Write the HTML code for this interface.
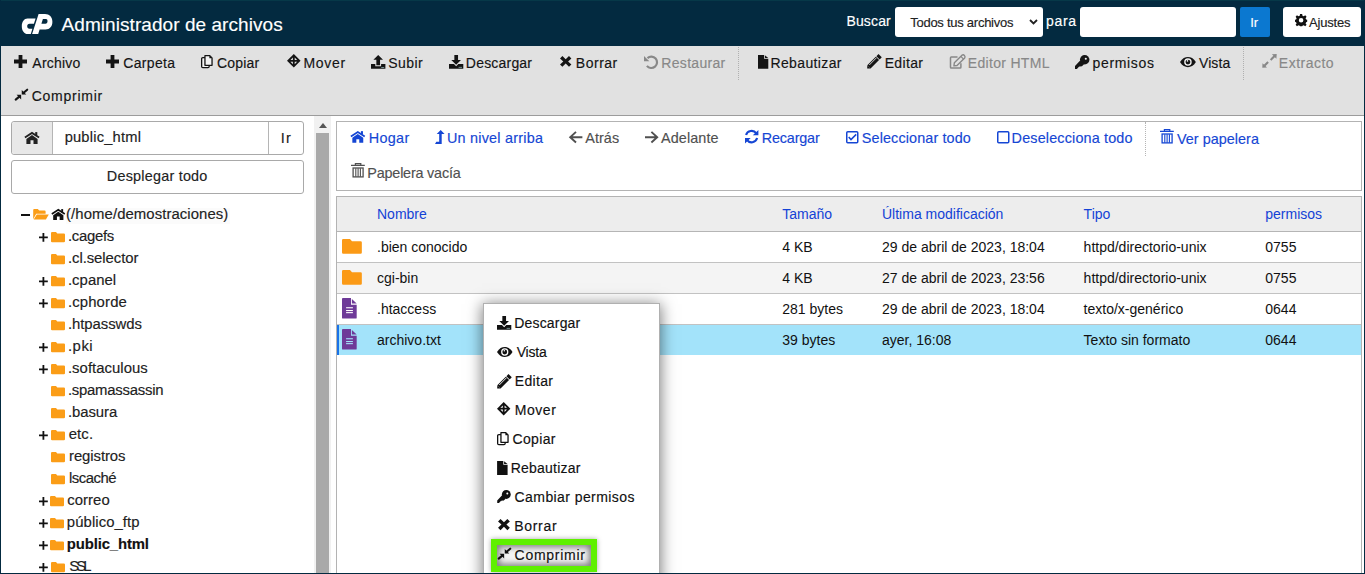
<!DOCTYPE html>
<html><head><meta charset="utf-8"><style>
html,body{margin:0;padding:0;}
body{width:1365px;height:574px;overflow:hidden;position:relative;background:#0a2639;font-family:"Liberation Sans", sans-serif;}
.t{position:absolute;white-space:nowrap;font-family:"Liberation Sans", sans-serif;}
.r{position:absolute;box-sizing:border-box;}
.i{position:absolute;overflow:visible;}
</style></head><body>
<div class="r" style="left:0px;top:0px;width:1365px;height:46px;background:#032a40;"></div>
<div class="r" style="left:0px;top:0px;width:1365px;height:1px;background:#063848;"></div>
<svg class="i" style="left:18px;top:8px;width:40px;height:30px;" viewBox="18 8 40 30" preserveAspectRatio="none" fill="#fff"><path d="M35.6 18.5 L27.5 18.5 C24.2 18.5 21.8 21.8 21.8 26.2 C21.8 30.8 24.2 34 27.8 34 L30.8 34 L32.4 28.7 L29.5 28.7 C28 28.7 27.2 27.6 27.2 26.2 C27.2 24.8 28 23.7 29.5 23.7 L33.9 23.7 Z"/><path d="M32.1 34 L38.2 34 L39.6 29.5 L45.5 29.5 C49.8 29.5 52.4 26.5 52.4 21.8 C52.4 16.8 49.4 14 45 14 L38.6 14 Z M42.9 19 L46 19 C47 19 47.5 19.8 47.5 21.2 C47.5 22.7 46.8 23.7 45.5 23.7 L41.4 23.7 Z" fill-rule="evenodd"/></svg>
<div class="t" style="left:61.56px;top:10.92px;font-size:19px;line-height:27px;color:#fff;letter-spacing:0.061px;-webkit-text-stroke:0.15px #fff;">Administrador de archivos</div>
<div class="t" style="left:846.45px;top:11.15px;font-size:14px;line-height:20px;color:#fff;letter-spacing:0.144px;-webkit-text-stroke:0.15px #fff;">Buscar</div>
<div class="r" style="left:895px;top:7px;width:148px;height:30px;background:#fff;border-radius:3px;"></div>
<div class="t" style="left:910.21px;top:13.80px;font-size:13px;line-height:18px;color:#222;letter-spacing:-0.260px;-webkit-text-stroke:0.15px #222;">Todos tus archivos</div>
<svg class="i" style="left:1029px;top:19px;width:9px;height:6px;" viewBox="0 0 9 6" preserveAspectRatio="none" fill="none"><path d="M1 1 L4.5 4.5 L8 1" fill="none" stroke="#222" stroke-width="1.8"/></svg>
<div class="t" style="left:1046.09px;top:11.15px;font-size:14px;line-height:20px;color:#fff;letter-spacing:0.632px;-webkit-text-stroke:0.15px #fff;">para</div>
<div class="r" style="left:1080px;top:7px;width:156px;height:30px;background:#fff;border-radius:3px;"></div>
<div class="r" style="left:1240px;top:7px;width:30px;height:30px;background:#0b78d0;border-radius:2px;"></div>
<div class="t" style="left:1250.20px;top:13.70px;font-size:13px;line-height:18px;color:#fff;-webkit-text-stroke:0.15px #fff;">Ir</div>
<div class="r" style="left:1283px;top:7px;width:78px;height:30px;background:#fff;border-radius:3px;"></div>
<svg class="i" style="left:1294.6px;top:13.8px;width:12.2px;height:12.2px;" viewBox="0 0 16 16" preserveAspectRatio="none" fill="#111"><path d="M6.6 0 H9.4 L9.8 2.3 L11.5 3.1 L13.4 1.8 L15.2 3.6 L13.9 5.5 L14.6 7.2 L16 7.5 V10.3 L14.6 10.7 L13.9 12.4 L15.2 14.2 L13.4 16 L11.5 14.7 L9.8 15.4 L9.4 16 H6.6 L6.2 15.4 L4.5 14.7 L2.6 16 L0.8 14.2 L2.1 12.4 L1.4 10.7 L0 10.3 V7.5 L1.4 7.2 L2.1 5.5 L0.8 3.6 L2.6 1.8 L4.5 3.1 L6.2 2.3 Z M8 5.2 A3 3 0 1 0 8 11.2 A3 3 0 1 0 8 5.2 Z" fill-rule="evenodd"/></svg>
<div class="t" style="left:1308.97px;top:13.90px;font-size:13px;line-height:18px;color:#222;letter-spacing:-0.189px;-webkit-text-stroke:0.15px #222;">Ajustes</div>
<div class="r" style="left:1px;top:46px;width:1363px;height:70px;background:#e1e1e1;border-bottom:1px solid #9c9c9c;"></div>
<svg class="i" style="left:14px;top:55px;width:13px;height:13px" viewBox="0 0 13.000 13.000" fill="#141414"><path d="M4.6 0 H8.4 V4.6 H13 V8.4 H8.4 V13 H4.6 V8.4 H0 V4.6 H4.6 Z"/></svg>
<div class="t" style="left:32.37px;top:53.15px;font-size:14px;line-height:20px;color:#141414;letter-spacing:0.190px;-webkit-text-stroke:0.15px #141414;">Archivo</div>
<svg class="i" style="left:106px;top:55px;width:13px;height:13px" viewBox="0 0 13.000 13.000" fill="#141414"><path d="M4.6 0 H8.4 V4.6 H13 V8.4 H8.4 V13 H4.6 V8.4 H0 V4.6 H4.6 Z"/></svg>
<div class="t" style="left:123.29px;top:53.15px;font-size:14px;line-height:20px;color:#141414;letter-spacing:0.319px;-webkit-text-stroke:0.15px #141414;">Carpeta</div>
<svg class="i" style="left:201.4px;top:55.2px;width:11.7px;height:13.3px" viewBox="0 0 11.700 13.300" fill="none"><path d="M1.8 2.65 H8.15 V11.5 Q8.15 12.65 7 12.65 H1.8 Q0.65 12.65 0.65 11.5 V3.8 Q0.65 2.65 1.8 2.65 Z" fill="#f4f4f4" stroke="#141414" stroke-width="1.3"/><path d="M3.95 0.65 H8.8 L11.05 2.9 V10.35 H3.95 Z" fill="#f4f4f4" stroke="#141414" stroke-width="1.3" stroke-linejoin="round"/><path d="M8.4 0.6 L11.1 3.3 H8.4 Z" fill="#141414"/></svg>
<div class="t" style="left:216.99px;top:53.15px;font-size:14px;line-height:20px;color:#141414;letter-spacing:0.202px;-webkit-text-stroke:0.15px #141414;">Copiar</div>
<svg class="i" style="left:286.5px;top:54.3px;width:13.6px;height:13.6px" viewBox="0 0 13.400 13.400" fill="#141414"><path d="M6.7 0 L13.4 6.7 L6.7 13.4 L0 6.7 Z"/><path d="M5.8 5.8 H3.4 L5.8 3.4 Z M7.6 5.8 H10 L7.6 3.4 Z M5.8 7.6 H3.4 L5.8 10 Z M7.6 7.6 H10 L7.6 10 Z" fill="#e1e1e1"/></svg>
<div class="t" style="left:303.45px;top:53.15px;font-size:14px;line-height:20px;color:#141414;letter-spacing:0.698px;-webkit-text-stroke:0.15px #141414;">Mover</div>
<svg class="i" style="left:371px;top:55px;width:14.4px;height:13.8px" viewBox="0 0 14.400 13.800" fill="#141414"><path d="M7.2 0 L12 4.8 H9.05 V10.2 H5.35 V4.8 H2.4 Z"/><path d="M0 9 H4.3 V11.3 H10.1 V9 H14.4 V13.8 H0 Z"/><rect x="10.2" y="12" width="3" height="0.8" fill="#8aa"/></svg>
<div class="t" style="left:388.36px;top:53.15px;font-size:14px;line-height:20px;color:#141414;letter-spacing:0.426px;-webkit-text-stroke:0.15px #141414;">Subir</div>
<svg class="i" style="left:448.6px;top:55px;width:14.3px;height:13.8px" viewBox="0 0 14.300 13.800" fill="#141414"><path d="M5.35 0 H9.05 V5 H12 L7.15 9.85 L2.3 5 H5.35 Z"/><path d="M0 9.1 H5 L7.15 11.25 L9.3 9.1 H14.3 V13.8 H0 Z"/><rect x="9.6" y="11.9" width="3.4" height="0.8" fill="#8aa"/></svg>
<div class="t" style="left:465.85px;top:53.15px;font-size:14px;line-height:20px;color:#141414;letter-spacing:0.200px;-webkit-text-stroke:0.15px #141414;">Descargar</div>
<svg class="i" style="left:559.7px;top:55.7px;width:11.4px;height:10.8px" viewBox="0 0 11.400 10.800" fill="#141414"><path d="M2.4 0 L5.7 3.2 L9 0 L11.4 2.4 L8.1 5.4 L11.4 8.4 L9 10.8 L5.7 7.6 L2.4 10.8 L0 8.4 L3.3 5.4 L0 2.4 Z"/></svg>
<div class="t" style="left:575.85px;top:53.15px;font-size:14px;line-height:20px;color:#141414;letter-spacing:0.499px;-webkit-text-stroke:0.15px #141414;">Borrar</div>
<svg class="i" style="left:644px;top:54.8px;width:13.8px;height:13.4px" viewBox="0 0 13.800 13.400" fill="#888888"><path d="M3.5 3.1 A5.7 5.7 0 1 1 2.9 10.9" fill="none" stroke="#888888" stroke-width="2.2"/><path d="M0 0.9 V6.2 H5.3 Z"/></svg>
<div class="t" style="left:661.35px;top:53.15px;font-size:14px;line-height:20px;color:#888888;letter-spacing:0.302px;-webkit-text-stroke:0.15px #888888;">Restaurar</div>
<div class="r" style="left:738px;top:47px;width:1px;height:33px;border-left:1px dotted #b0b0b0;"></div>
<svg class="i" style="left:757.7px;top:55.1px;width:10.3px;height:13.9px" viewBox="0 0 10.500 14.000" fill="#141414"><path d="M0 0 H6.2 V3.8 H10.5 V14 H0 Z"/><path d="M7.0 0.2 L10.4 3.0 H7.0 Z"/></svg>
<div class="t" style="left:770.45px;top:53.15px;font-size:14px;line-height:20px;color:#141414;letter-spacing:0.376px;-webkit-text-stroke:0.15px #141414;">Rebautizar</div>
<svg class="i" style="left:864.2px;top:52px;width:20px;height:20px" viewBox="0 0 20.000 20.000" fill="#141414"><path d="M6.6 16.45 L3.2 16.6 L3.35 13.2 Z" /><path d="M4.97 14.83 L13.45 6.35" stroke="#141414" stroke-width="4.6"/><path d="M14.02 5.78 L16.14 3.66" stroke="#141414" stroke-width="4.6"/><path d="M5.25 13.0 L12.32 5.93" stroke="#e1e1e1" stroke-width="0.9"/></svg>
<div class="t" style="left:884.65px;top:53.15px;font-size:14px;line-height:20px;color:#141414;letter-spacing:0.364px;-webkit-text-stroke:0.15px #141414;">Editar</div>
<svg class="i" style="left:944px;top:50px;width:24px;height:22px" viewBox="0 0 24.000 22.000" fill="#888888"><path d="M13.5 6.9 H7.3 Q6.5 6.9 6.5 7.7 V17.3 Q6.5 18.1 7.3 18.1 H16.1 Q16.9 18.1 16.9 17.3 V13.3" fill="none" stroke="#888888" stroke-width="1.5"/><path d="M9.9 15.9 L10.35 12.8 L18.0 5.2 Q19.3 4.3 20.4 5.4 Q21.5 6.6 20.7 7.9 L13.0 15.5 Z" fill="none" stroke="#888888" stroke-width="1.4" stroke-linejoin="round"/><path d="M16.9 6.35 L19.5 9.05" stroke="#888888" stroke-width="1.2"/></svg>
<div class="t" style="left:967.85px;top:53.15px;font-size:14px;line-height:20px;color:#888888;letter-spacing:0.304px;-webkit-text-stroke:0.15px #888888;">Editor HTML</div>
<svg class="i" style="left:1075.4px;top:54.9px;width:14.5px;height:14px" viewBox="0 0 14.500 14.000" fill="#141414"><circle cx="9.7" cy="4.75" r="4.75"/><circle cx="10.8" cy="3.7" r="1.05" fill="#f4f4f4"/><path d="M5.2 5.5 L9.0 9.3 L6.7 11.6 L5.9 11.0 L5.0 11.9 L4.4 11.3 L1.9 14 H0 V11.1 Z"/></svg>
<div class="t" style="left:1092.59px;top:53.15px;font-size:14px;line-height:20px;color:#141414;letter-spacing:0.645px;-webkit-text-stroke:0.15px #141414;">permisos</div>
<svg class="i" style="left:1179.8px;top:56.7px;width:15.9px;height:10.2px" viewBox="0 0 15.900 10.200" fill="#141414"><path d="M0 5.1 C2.2 1.3 5.2 0 7.95 0 C10.7 0 13.7 1.3 15.9 5.1 C13.7 8.9 10.7 10.2 7.95 10.2 C5.2 10.2 2.2 8.9 0 5.1 Z"/><circle cx="7.95" cy="5.1" r="3.75" fill="#f4f4f4"/><circle cx="7.95" cy="5.1" r="2.45"/><circle cx="7.5" cy="3.9" r="0.8" fill="#f4f4f4"/></svg>
<div class="t" style="left:1198.93px;top:53.15px;font-size:14px;line-height:20px;color:#141414;letter-spacing:0.125px;-webkit-text-stroke:0.15px #141414;">Vista</div>
<div class="r" style="left:1243px;top:47px;width:1px;height:33px;border-left:1px dotted #b0b0b0;"></div>
<svg class="i" style="left:1256px;top:50px;width:24px;height:22px" viewBox="0 0 24.000 22.000" fill="#888888"><path d="M20.7 4.0 L15.9 4.3 L20.4 8.8 Z M6.3 17.8 L6.5 13.3 L11.0 17.6 Z"/><path d="M18.6 6.1 L14.6 10.0 M8.4 15.7 L12.1 12.0" stroke="#888888" stroke-width="2.1"/></svg>
<div class="t" style="left:1278.85px;top:53.15px;font-size:14px;line-height:20px;color:#888888;letter-spacing:0.483px;-webkit-text-stroke:0.15px #888888;">Extracto</div>
<svg class="i" style="left:14.5px;top:89.3px;width:13px;height:11.5px" viewBox="0 0 13.000 11.500" fill="#141414"><path d="M6.75 5.45 L6.75 0.9 L11.3 5.45 Z M6.15 5.85 L1.6 5.85 L6.15 10.4 Z"/><path d="M8 4.2 L12.2 0.7 M4.9 7.1 L0.7 10.6" stroke="#141414" stroke-width="2.1" stroke-linecap="round"/></svg>
<div class="t" style="left:31.69px;top:86.15px;font-size:14px;line-height:20px;color:#141414;letter-spacing:0.750px;-webkit-text-stroke:0.15px #141414;">Comprimir</div>
<div class="r" style="left:1px;top:116px;width:1363px;height:457px;background:#fff;"></div>
<div class="r" style="left:11px;top:121px;width:293px;height:34px;border:1px solid #a9a9a9;border-radius:3px;background:#fff;"></div>
<div class="r" style="left:12px;top:122px;width:41px;height:32px;background:#e8e8e8;border-right:1px solid #b5b5b5;border-radius:3px 0 0 3px;"></div>
<svg class="i" style="left:24px;top:132px;width:15.9px;height:12px" viewBox="0 0 15.900 12.000" fill="#222"><path d="M0.9 5.5 L8 0.9 L15.1 5.5" fill="none" stroke="#222" stroke-width="1.8"/><rect x="11.2" y="0.1" width="2.1" height="3.4"/><path d="M2.4 6.9 L8 3.0 L13.6 6.9 V12 H9.5 V8.3 H6.5 V12 H2.4 Z"/></svg>
<div class="r" style="left:268px;top:122px;width:1px;height:32px;background:#b5b5b5;"></div>
<div class="t" style="left:64.64px;top:127.01px;font-size:14.7px;line-height:21px;color:#222;letter-spacing:0.199px;-webkit-text-stroke:0.15px #222;">public_html</div>
<div class="t" style="left:280.67px;top:127.98px;font-size:14.5px;line-height:20px;color:#222;letter-spacing:1.421px;-webkit-text-stroke:0.15px #222;">Ir</div>
<div class="r" style="left:11px;top:160px;width:293px;height:34px;border:1px solid #a9a9a9;border-radius:3px;background:#fff;"></div>
<div class="t" style="left:106.82px;top:166.01px;font-size:14.4px;line-height:20px;color:#222;letter-spacing:0.225px;-webkit-text-stroke:0.15px #222;">Desplegar todo</div>
<div class="r" style="left:66px;top:208px;width:164px;height:16px;background:#fbfbfb;"></div>
<div class="r" style="left:21.1px;top:214.3px;width:8.8px;height:1.6px;background:#111;"></div>
<svg class="i" style="left:32.9px;top:209.3px;width:16px;height:10.5px" viewBox="0 0 16.000 10.500" fill="#fb9d17"><path d="M0.2 1 Q0.2 0 1.2 0 H4.8 L6.2 1.5 H11.6 Q12.6 1.5 12.6 2.5 V4.8 H3.2 L0.2 10.2 Z"/><path d="M3.8 5.6 H15.8 L12.9 10.4 H0.7 Z"/></svg>
<svg class="i" style="left:51.3px;top:209px;width:14.6px;height:12px" viewBox="0 0 16.000 13.151" fill="#111"><path d="M0.9 5.5 L8 0.9 L15.1 5.5" fill="none" stroke="#111" stroke-width="1.8"/><rect x="11.2" y="0.1" width="2.1" height="3.4"/><path d="M2.4 6.9 L8 3.0 L13.6 6.9 V12 H9.5 V8.3 H6.5 V12 H2.4 Z"/></svg>
<div class="t" style="left:66.08px;top:204.34px;font-size:14.9px;line-height:21px;color:#222;letter-spacing:0.081px;-webkit-text-stroke:0.15px #222;">(/home/demostraciones)</div>
<svg class="i" style="left:39.1px;top:232.6px;width:8.8px;height:8.8px" viewBox="0 0 8.800 8.800" fill="#111"><path d="M3.5 0 H5.3 V3.5 H8.8 V5.3 H5.3 V8.8 H3.5 V5.3 H0 V3.5 H3.5 Z"/></svg>
<svg class="i" style="left:50.9px;top:231.7px;width:14.1px;height:10.3px" viewBox="0 0 14.100 10.300" fill="#fb9d17"><path d="M0 1.1 Q0 0 1.1 0 H5 L6.3 1.4 H12.9 Q14 1.4 14 2.5 V9.2 Q14 10.3 12.9 10.3 H1.1 Q0 10.3 0 9.2 Z"/></svg>
<div class="t" style="left:67.94px;top:225.94px;font-size:14.9px;line-height:21px;color:#222;letter-spacing:-0.291px;-webkit-text-stroke:0.15px #222;">.cagefs</div>
<svg class="i" style="left:50.9px;top:253.70000000000002px;width:14.1px;height:10.3px" viewBox="0 0 14.100 10.300" fill="#fb9d17"><path d="M0 1.1 Q0 0 1.1 0 H5 L6.3 1.4 H12.9 Q14 1.4 14 2.5 V9.2 Q14 10.3 12.9 10.3 H1.1 Q0 10.3 0 9.2 Z"/></svg>
<div class="t" style="left:67.94px;top:247.94px;font-size:14.9px;line-height:21px;color:#222;letter-spacing:-0.063px;-webkit-text-stroke:0.15px #222;">.cl.selector</div>
<svg class="i" style="left:39.1px;top:276.6px;width:8.8px;height:8.8px" viewBox="0 0 8.800 8.800" fill="#111"><path d="M3.5 0 H5.3 V3.5 H8.8 V5.3 H5.3 V8.8 H3.5 V5.3 H0 V3.5 H3.5 Z"/></svg>
<svg class="i" style="left:50.9px;top:275.70000000000005px;width:14.1px;height:10.3px" viewBox="0 0 14.100 10.300" fill="#fb9d17"><path d="M0 1.1 Q0 0 1.1 0 H5 L6.3 1.4 H12.9 Q14 1.4 14 2.5 V9.2 Q14 10.3 12.9 10.3 H1.1 Q0 10.3 0 9.2 Z"/></svg>
<div class="t" style="left:67.94px;top:269.94px;font-size:14.9px;line-height:21px;color:#222;letter-spacing:0.036px;-webkit-text-stroke:0.15px #222;">.cpanel</div>
<svg class="i" style="left:39.1px;top:298.6px;width:8.8px;height:8.8px" viewBox="0 0 8.800 8.800" fill="#111"><path d="M3.5 0 H5.3 V3.5 H8.8 V5.3 H5.3 V8.8 H3.5 V5.3 H0 V3.5 H3.5 Z"/></svg>
<svg class="i" style="left:50.9px;top:297.70000000000005px;width:14.1px;height:10.3px" viewBox="0 0 14.100 10.300" fill="#fb9d17"><path d="M0 1.1 Q0 0 1.1 0 H5 L6.3 1.4 H12.9 Q14 1.4 14 2.5 V9.2 Q14 10.3 12.9 10.3 H1.1 Q0 10.3 0 9.2 Z"/></svg>
<div class="t" style="left:67.94px;top:291.94px;font-size:14.9px;line-height:21px;color:#222;letter-spacing:0.134px;-webkit-text-stroke:0.15px #222;">.cphorde</div>
<svg class="i" style="left:50.9px;top:319.70000000000005px;width:14.1px;height:10.3px" viewBox="0 0 14.100 10.300" fill="#fb9d17"><path d="M0 1.1 Q0 0 1.1 0 H5 L6.3 1.4 H12.9 Q14 1.4 14 2.5 V9.2 Q14 10.3 12.9 10.3 H1.1 Q0 10.3 0 9.2 Z"/></svg>
<div class="t" style="left:67.94px;top:313.94px;font-size:14.9px;line-height:21px;color:#222;letter-spacing:-0.049px;-webkit-text-stroke:0.15px #222;">.htpasswds</div>
<svg class="i" style="left:39.1px;top:342.6px;width:8.8px;height:8.8px" viewBox="0 0 8.800 8.800" fill="#111"><path d="M3.5 0 H5.3 V3.5 H8.8 V5.3 H5.3 V8.8 H3.5 V5.3 H0 V3.5 H3.5 Z"/></svg>
<svg class="i" style="left:50.9px;top:341.70000000000005px;width:14.1px;height:10.3px" viewBox="0 0 14.100 10.300" fill="#fb9d17"><path d="M0 1.1 Q0 0 1.1 0 H5 L6.3 1.4 H12.9 Q14 1.4 14 2.5 V9.2 Q14 10.3 12.9 10.3 H1.1 Q0 10.3 0 9.2 Z"/></svg>
<div class="t" style="left:67.94px;top:335.94px;font-size:14.9px;line-height:21px;color:#222;letter-spacing:0.523px;-webkit-text-stroke:0.15px #222;">.pki</div>
<svg class="i" style="left:39.1px;top:364.6px;width:8.8px;height:8.8px" viewBox="0 0 8.800 8.800" fill="#111"><path d="M3.5 0 H5.3 V3.5 H8.8 V5.3 H5.3 V8.8 H3.5 V5.3 H0 V3.5 H3.5 Z"/></svg>
<svg class="i" style="left:50.9px;top:363.70000000000005px;width:14.1px;height:10.3px" viewBox="0 0 14.100 10.300" fill="#fb9d17"><path d="M0 1.1 Q0 0 1.1 0 H5 L6.3 1.4 H12.9 Q14 1.4 14 2.5 V9.2 Q14 10.3 12.9 10.3 H1.1 Q0 10.3 0 9.2 Z"/></svg>
<div class="t" style="left:67.94px;top:357.94px;font-size:14.9px;line-height:21px;color:#222;letter-spacing:0.026px;-webkit-text-stroke:0.15px #222;">.softaculous</div>
<svg class="i" style="left:50.9px;top:385.70000000000005px;width:14.1px;height:10.3px" viewBox="0 0 14.100 10.300" fill="#fb9d17"><path d="M0 1.1 Q0 0 1.1 0 H5 L6.3 1.4 H12.9 Q14 1.4 14 2.5 V9.2 Q14 10.3 12.9 10.3 H1.1 Q0 10.3 0 9.2 Z"/></svg>
<div class="t" style="left:67.94px;top:379.94px;font-size:14.9px;line-height:21px;color:#222;letter-spacing:-0.244px;-webkit-text-stroke:0.15px #222;">.spamassassin</div>
<svg class="i" style="left:50.9px;top:407.70000000000005px;width:14.1px;height:10.3px" viewBox="0 0 14.100 10.300" fill="#fb9d17"><path d="M0 1.1 Q0 0 1.1 0 H5 L6.3 1.4 H12.9 Q14 1.4 14 2.5 V9.2 Q14 10.3 12.9 10.3 H1.1 Q0 10.3 0 9.2 Z"/></svg>
<div class="t" style="left:67.94px;top:401.94px;font-size:14.9px;line-height:21px;color:#222;letter-spacing:-0.073px;-webkit-text-stroke:0.15px #222;">.basura</div>
<svg class="i" style="left:39.1px;top:430.6px;width:8.8px;height:8.8px" viewBox="0 0 8.800 8.800" fill="#111"><path d="M3.5 0 H5.3 V3.5 H8.8 V5.3 H5.3 V8.8 H3.5 V5.3 H0 V3.5 H3.5 Z"/></svg>
<svg class="i" style="left:50.9px;top:429.70000000000005px;width:14.1px;height:10.3px" viewBox="0 0 14.100 10.300" fill="#fb9d17"><path d="M0 1.1 Q0 0 1.1 0 H5 L6.3 1.4 H12.9 Q14 1.4 14 2.5 V9.2 Q14 10.3 12.9 10.3 H1.1 Q0 10.3 0 9.2 Z"/></svg>
<div class="t" style="left:68.67px;top:423.94px;font-size:14.9px;line-height:21px;color:#222;letter-spacing:0.121px;-webkit-text-stroke:0.15px #222;">etc.</div>
<svg class="i" style="left:50.9px;top:451.70000000000005px;width:14.1px;height:10.3px" viewBox="0 0 14.100 10.300" fill="#fb9d17"><path d="M0 1.1 Q0 0 1.1 0 H5 L6.3 1.4 H12.9 Q14 1.4 14 2.5 V9.2 Q14 10.3 12.9 10.3 H1.1 Q0 10.3 0 9.2 Z"/></svg>
<div class="t" style="left:69.02px;top:445.94px;font-size:14.9px;line-height:21px;color:#222;letter-spacing:-0.078px;-webkit-text-stroke:0.15px #222;">registros</div>
<svg class="i" style="left:50.9px;top:473.70000000000005px;width:14.1px;height:10.3px" viewBox="0 0 14.100 10.300" fill="#fb9d17"><path d="M0 1.1 Q0 0 1.1 0 H5 L6.3 1.4 H12.9 Q14 1.4 14 2.5 V9.2 Q14 10.3 12.9 10.3 H1.1 Q0 10.3 0 9.2 Z"/></svg>
<div class="t" style="left:69.00px;top:467.94px;font-size:14.9px;line-height:21px;color:#222;letter-spacing:-0.476px;-webkit-text-stroke:0.15px #222;">lscach&eacute;</div>
<svg class="i" style="left:39.1px;top:496.6px;width:8.8px;height:8.8px" viewBox="0 0 8.800 8.800" fill="#111"><path d="M3.5 0 H5.3 V3.5 H8.8 V5.3 H5.3 V8.8 H3.5 V5.3 H0 V3.5 H3.5 Z"/></svg>
<svg class="i" style="left:50.2px;top:495.70000000000005px;width:14.1px;height:10.3px" viewBox="0 0 14.100 10.300" fill="#fb9d17"><path d="M0 1.1 Q0 0 1.1 0 H5 L6.3 1.4 H12.9 Q14 1.4 14 2.5 V9.2 Q14 10.3 12.9 10.3 H1.1 Q0 10.3 0 9.2 Z"/></svg>
<div class="t" style="left:67.17px;top:489.94px;font-size:14.9px;line-height:21px;color:#222;letter-spacing:0.065px;-webkit-text-stroke:0.15px #222;">correo</div>
<svg class="i" style="left:39.1px;top:518.6px;width:8.8px;height:8.8px" viewBox="0 0 8.800 8.800" fill="#111"><path d="M3.5 0 H5.3 V3.5 H8.8 V5.3 H5.3 V8.8 H3.5 V5.3 H0 V3.5 H3.5 Z"/></svg>
<svg class="i" style="left:50.2px;top:517.7px;width:14.1px;height:10.3px" viewBox="0 0 14.100 10.300" fill="#fb9d17"><path d="M0 1.1 Q0 0 1.1 0 H5 L6.3 1.4 H12.9 Q14 1.4 14 2.5 V9.2 Q14 10.3 12.9 10.3 H1.1 Q0 10.3 0 9.2 Z"/></svg>
<div class="t" style="left:66.83px;top:511.94px;font-size:14.9px;line-height:21px;color:#222;letter-spacing:0.072px;-webkit-text-stroke:0.15px #222;">p&uacute;blico_ftp</div>
<svg class="i" style="left:39.1px;top:540.6px;width:8.8px;height:8.8px" viewBox="0 0 8.800 8.800" fill="#111"><path d="M3.5 0 H5.3 V3.5 H8.8 V5.3 H5.3 V8.8 H3.5 V5.3 H0 V3.5 H3.5 Z"/></svg>
<svg class="i" style="left:50.2px;top:539.7px;width:14.1px;height:10.3px" viewBox="0 0 14.100 10.300" fill="#fb9d17"><path d="M0 1.1 Q0 0 1.1 0 H5 L6.3 1.4 H12.9 Q14 1.4 14 2.5 V9.2 Q14 10.3 12.9 10.3 H1.1 Q0 10.3 0 9.2 Z"/></svg>
<div class="t" style="left:66.82px;top:533.94px;font-size:14.9px;line-height:21px;color:#111;font-weight:700;letter-spacing:-0.138px;-webkit-text-stroke:0.15px #111;">public_html</div>
<svg class="i" style="left:39.1px;top:562.6px;width:8.8px;height:8.8px" viewBox="0 0 8.800 8.800" fill="#111"><path d="M3.5 0 H5.3 V3.5 H8.8 V5.3 H5.3 V8.8 H3.5 V5.3 H0 V3.5 H3.5 Z"/></svg>
<svg class="i" style="left:50.9px;top:561.7px;width:14.1px;height:10.3px" viewBox="0 0 14.100 10.300" fill="#fb9d17"><path d="M0 1.1 Q0 0 1.1 0 H5 L6.3 1.4 H12.9 Q14 1.4 14 2.5 V9.2 Q14 10.3 12.9 10.3 H1.1 Q0 10.3 0 9.2 Z"/></svg>
<div class="t" style="left:69.31px;top:555.94px;font-size:14.9px;line-height:21px;color:#222;letter-spacing:-2.942px;-webkit-text-stroke:0.15px #222;">SSL</div>
<div class="r" style="left:314px;top:116px;width:17px;height:457px;background:#f1f1f1;"></div>
<svg class="i" style="left:319px;top:123px;width:8px;height:5px" viewBox="0 0 8.000 5.000" fill="#555"><path d="M0 5 L4 0 L8 5 Z"/></svg>
<div class="r" style="left:316px;top:133px;width:13px;height:440px;background:#a9a9a9;"></div>
<div class="r" style="left:336px;top:121px;width:1026px;height:70px;border:1px solid #b3b3b3;background:#fff;"></div>
<svg class="i" style="left:350px;top:131px;width:15.6px;height:11.8px" viewBox="0 0 16.000 12.000" fill="#1546d4"><path d="M0.9 5.5 L8 0.9 L15.1 5.5" fill="none" stroke="#1546d4" stroke-width="1.8"/><rect x="11.2" y="0.1" width="2.1" height="3.4"/><path d="M2.4 6.9 L8 3.0 L13.6 6.9 V12 H9.5 V8.3 H6.5 V12 H2.4 Z"/></svg>
<div class="t" style="left:368.82px;top:127.81px;font-size:14.4px;line-height:20px;color:#1546d4;letter-spacing:0.300px;-webkit-text-stroke:0.15px #1546d4;">Hogar</div>
<svg class="i" style="left:435.2px;top:129.8px;width:9.6px;height:14px" viewBox="0 0 9.600 14.000" fill="#1546d4"><path d="M5.7 0 L9.6 4 H6.7 V14 H0 L1.3 11.7 H4.2 V4 H1.7 Z"/></svg>
<div class="t" style="left:446.89px;top:127.81px;font-size:14.4px;line-height:20px;color:#1546d4;letter-spacing:0.234px;-webkit-text-stroke:0.15px #1546d4;">Un nivel arriba</div>
<svg class="i" style="left:569.2px;top:130.8px;width:13.4px;height:12.4px" viewBox="0 0 13.400 12.400" fill="#505050"><path d="M7 0.9 L1.2 6.2 L7 11.5 M1.5 6.2 H13.4" fill="none" stroke="#505050" stroke-width="1.9"/></svg>
<div class="t" style="left:585.37px;top:127.81px;font-size:14.4px;line-height:20px;color:#505050;letter-spacing:0.034px;-webkit-text-stroke:0.15px #505050;">Atr&aacute;s</div>
<svg class="i" style="left:644.5px;top:130.8px;width:13.4px;height:12.4px" viewBox="0 0 13.400 12.400" fill="#505050"><path d="M6.4 0.9 L12.2 6.2 L6.4 11.5 M11.9 6.2 H0" fill="none" stroke="#505050" stroke-width="1.9"/></svg>
<div class="t" style="left:660.97px;top:127.81px;font-size:14.4px;line-height:20px;color:#505050;letter-spacing:0.116px;-webkit-text-stroke:0.15px #505050;">Adelante</div>
<svg class="i" style="left:745.4px;top:130.2px;width:13.4px;height:13.4px" viewBox="0 0 13.400 13.400" fill="#1546d4"><path d="M1.05 5.1 A5.75 5.75 0 0 1 11.3 3.3 M12.15 8.1 A5.75 5.75 0 0 1 1.9 9.9" fill="none" stroke="#1546d4" stroke-width="2.1"/><path d="M13.4 0 V5.2 H7.8 Z M0 7.9 H5.7 L0 13.4 Z"/></svg>
<div class="t" style="left:761.82px;top:127.81px;font-size:14.4px;line-height:20px;color:#1546d4;letter-spacing:-0.186px;-webkit-text-stroke:0.15px #1546d4;">Recargar</div>
<svg class="i" style="left:846.4px;top:130.8px;width:12.5px;height:12.5px" viewBox="0 0 12.500 12.500" fill="none"><rect x="0.75" y="0.75" width="11" height="11" rx="1" fill="none" stroke="#1546d4" stroke-width="1.5"/><path d="M2.7 5.9 L5 8.6 L10.2 3.4" fill="none" stroke="#1546d4" stroke-width="1.5"/></svg>
<div class="t" style="left:861.84px;top:127.81px;font-size:14.4px;line-height:20px;color:#1546d4;letter-spacing:0.120px;-webkit-text-stroke:0.15px #1546d4;">Seleccionar todo</div>
<svg class="i" style="left:996.6px;top:130.8px;width:12.5px;height:12.5px" viewBox="0 0 12.500 12.500" fill="none"><rect x="0.75" y="0.75" width="11" height="11" rx="1" fill="none" stroke="#1546d4" stroke-width="1.5"/></svg>
<div class="t" style="left:1011.62px;top:127.81px;font-size:14.4px;line-height:20px;color:#1546d4;letter-spacing:0.157px;-webkit-text-stroke:0.15px #1546d4;">Deselecciona todo</div>
<div class="r" style="left:1145px;top:122px;width:1px;height:34px;border-left:1px dotted #b5b5b5;"></div>
<svg class="i" style="left:1160.2px;top:128.8px;width:13.8px;height:14.6px" viewBox="0 0 13.800 14.600" fill="none"><path d="M0 2.3 H13.8 M4.4 2.1 V0.6 H9.8 V2.1" fill="none" stroke="#1546d4" stroke-width="1.2"/><rect x="2.1" y="5.0" width="10" height="8.9" fill="none" stroke="#1546d4" stroke-width="1.3"/><path d="M4.8 5.2 V13.8 M7.1 5.2 V13.8 M9.4 5.2 V13.8" stroke="#1546d4" stroke-width="1.1"/></svg>
<div class="t" style="left:1176.93px;top:129.01px;font-size:14.4px;line-height:20px;color:#1546d4;letter-spacing:0.037px;-webkit-text-stroke:0.15px #1546d4;">Ver papelera</div>
<svg class="i" style="left:351px;top:162.8px;width:13.8px;height:14.6px" viewBox="0 0 13.800 14.600" fill="none"><path d="M0 2.3 H13.8 M4.4 2.1 V0.6 H9.8 V2.1" fill="none" stroke="#505050" stroke-width="1.2"/><rect x="2.1" y="5.0" width="10" height="8.9" fill="none" stroke="#505050" stroke-width="1.3"/><path d="M4.8 5.2 V13.8 M7.1 5.2 V13.8 M9.4 5.2 V13.8" stroke="#505050" stroke-width="1.1"/></svg>
<div class="t" style="left:367.32px;top:162.51px;font-size:14.4px;line-height:20px;color:#505050;letter-spacing:-0.199px;-webkit-text-stroke:0.15px #505050;">Papelera vac&iacute;a</div>
<div class="r" style="left:336px;top:196px;width:1026px;height:378px;border:1px solid #b3b3b3;background:#fff;"></div>
<div class="r" style="left:337px;top:197px;width:1024px;height:35px;background:#ededed;border-bottom:1px solid #b5b5b5;"></div>
<div class="t" style="left:377.00px;top:203.95px;font-size:14px;line-height:20px;color:#1342d6;">Nombre</div>
<div class="t" style="left:782.30px;top:203.95px;font-size:14px;line-height:20px;color:#1342d6;">Tama&ntilde;o</div>
<div class="t" style="left:882.00px;top:203.95px;font-size:14px;line-height:20px;color:#1342d6;">&Uacute;ltima modificaci&oacute;n</div>
<div class="t" style="left:1083.60px;top:203.95px;font-size:14px;line-height:20px;color:#1342d6;">Tipo</div>
<div class="t" style="left:1265.30px;top:203.95px;font-size:14px;line-height:20px;color:#1342d6;">permisos</div>
<div class="r" style="left:337px;top:232px;width:1024px;height:31px;background:#fff;border-bottom:1px solid #c2c2c2;"></div>
<svg class="i" style="left:342px;top:239.2px;width:19.85px;height:14.7px" viewBox="0 0 19.850 14.700" fill="#fb9a16"><path d="M0 1.2 Q0 0 1.2 0 H8 L10 2.3 H18.6 Q19.85 2.3 19.85 3.5 V13.5 Q19.85 14.7 18.6 14.7 H1.2 Q0 14.7 0 13.5 Z"/></svg>
<div class="t" style="left:377.00px;top:236.75px;font-size:14px;line-height:20px;color:#111;">.bien conocido</div>
<div class="t" style="left:782.30px;top:236.75px;font-size:14px;line-height:20px;color:#111;">4 KB</div>
<div class="t" style="left:882.00px;top:236.75px;font-size:14px;line-height:20px;color:#111;">29 de abril de 2023, 18:04</div>
<div class="t" style="left:1083.60px;top:236.75px;font-size:14px;line-height:20px;color:#111;">httpd/directorio-unix</div>
<div class="t" style="left:1265.30px;top:236.75px;font-size:14px;line-height:20px;color:#111;">0755</div>
<div class="r" style="left:337px;top:263px;width:1024px;height:31px;background:#f4f4f4;border-bottom:1px solid #c2c2c2;"></div>
<svg class="i" style="left:342px;top:270.2px;width:19.85px;height:14.7px" viewBox="0 0 19.850 14.700" fill="#fb9a16"><path d="M0 1.2 Q0 0 1.2 0 H8 L10 2.3 H18.6 Q19.85 2.3 19.85 3.5 V13.5 Q19.85 14.7 18.6 14.7 H1.2 Q0 14.7 0 13.5 Z"/></svg>
<div class="t" style="left:377.00px;top:267.75px;font-size:14px;line-height:20px;color:#111;">cgi-bin</div>
<div class="t" style="left:782.30px;top:267.75px;font-size:14px;line-height:20px;color:#111;">4 KB</div>
<div class="t" style="left:882.00px;top:267.75px;font-size:14px;line-height:20px;color:#111;">27 de abril de 2023, 23:56</div>
<div class="t" style="left:1083.60px;top:267.75px;font-size:14px;line-height:20px;color:#111;">httpd/directorio-unix</div>
<div class="t" style="left:1265.30px;top:267.75px;font-size:14px;line-height:20px;color:#111;">0755</div>
<div class="r" style="left:337px;top:294px;width:1024px;height:31px;background:#fff;border-bottom:1px solid #c2c2c2;"></div>
<svg class="i" style="left:342.1px;top:298.1px;width:14.7px;height:20.6px" viewBox="0 0 14.700 20.600" fill="#6e3a98"><path d="M0.9 0 H9 V6.8 H14.7 V19.7 Q14.7 20.6 13.8 20.6 H0.9 Q0 20.6 0 19.7 V0.9 Q0 0 0.9 0 Z"/><path d="M9.9 0.9 L14.7 5.6 H9.9 Z"/><rect x="4.1" y="9.2" width="6.8" height="1.1" fill="#fff"/><rect x="4.1" y="12.0" width="6.8" height="1.1" fill="#fff"/><rect x="4.1" y="14.1" width="6.8" height="1.1" fill="#fff"/></svg>
<div class="t" style="left:377.00px;top:298.75px;font-size:14px;line-height:20px;color:#111;">.htaccess</div>
<div class="t" style="left:782.30px;top:298.75px;font-size:14px;line-height:20px;color:#111;">281 bytes</div>
<div class="t" style="left:882.00px;top:298.75px;font-size:14px;line-height:20px;color:#111;">29 de abril de 2023, 18:04</div>
<div class="t" style="left:1083.60px;top:298.75px;font-size:14px;line-height:20px;color:#111;">texto/x-gen&eacute;rico</div>
<div class="t" style="left:1265.30px;top:298.75px;font-size:14px;line-height:20px;color:#111;">0644</div>
<div class="r" style="left:337px;top:325px;width:1024px;height:31px;background:#a3e3fa;height:30px;"></div>
<svg class="i" style="left:342.1px;top:329.1px;width:14.7px;height:20.6px" viewBox="0 0 14.700 20.600" fill="#6e3a98"><path d="M0.9 0 H9 V6.8 H14.7 V19.7 Q14.7 20.6 13.8 20.6 H0.9 Q0 20.6 0 19.7 V0.9 Q0 0 0.9 0 Z"/><path d="M9.9 0.9 L14.7 5.6 H9.9 Z"/><rect x="4.1" y="9.2" width="6.8" height="1.1" fill="#a3e3fa"/><rect x="4.1" y="12.0" width="6.8" height="1.1" fill="#a3e3fa"/><rect x="4.1" y="14.1" width="6.8" height="1.1" fill="#a3e3fa"/></svg>
<div class="t" style="left:377.00px;top:329.75px;font-size:14px;line-height:20px;color:#111;">archivo.txt</div>
<div class="t" style="left:782.30px;top:329.75px;font-size:14px;line-height:20px;color:#111;">39 bytes</div>
<div class="t" style="left:882.00px;top:329.75px;font-size:14px;line-height:20px;color:#111;">ayer, 16:08</div>
<div class="t" style="left:1083.60px;top:329.75px;font-size:14px;line-height:20px;color:#111;">Texto sin formato</div>
<div class="t" style="left:1265.30px;top:329.75px;font-size:14px;line-height:20px;color:#111;">0644</div>
<div class="r" style="left:337px;top:325px;width:2px;height:30px;background:#1a73e8;"></div>
<div class="r" style="left:483px;top:303px;width:177px;height:280px;background:#fff;border:1px solid #b0b0b0;box-shadow:0 2px 14px 1px rgba(0,0,0,0.5);"></div>
<svg class="i" style="left:496.8px;top:316.1px;width:14.3px;height:13.8px" viewBox="0 0 14.300 13.800" fill="#111"><path d="M5.35 0 H9.05 V5 H12 L7.15 9.85 L2.3 5 H5.35 Z"/><path d="M0 9.1 H5 L7.15 11.25 L9.3 9.1 H14.3 V13.8 H0 Z"/><rect x="9.6" y="11.9" width="3.4" height="0.8" fill="#8aa"/></svg>
<div class="t" style="left:514.25px;top:313.15px;font-size:14px;line-height:20px;color:#111;letter-spacing:0.176px;-webkit-text-stroke:0.15px #111;">Descargar</div>
<svg class="i" style="left:497px;top:347px;width:15.5px;height:10px" viewBox="0 0 15.900 10.200" fill="#111"><path d="M0 5.1 C2.2 1.3 5.2 0 7.95 0 C10.7 0 13.7 1.3 15.9 5.1 C13.7 8.9 10.7 10.2 7.95 10.2 C5.2 10.2 2.2 8.9 0 5.1 Z"/><circle cx="7.95" cy="5.1" r="3.75" fill="#fff"/><circle cx="7.95" cy="5.1" r="2.45"/><circle cx="7.5" cy="3.9" r="0.8" fill="#fff"/></svg>
<div class="t" style="left:516.63px;top:342.15px;font-size:14px;line-height:20px;color:#111;letter-spacing:-0.175px;-webkit-text-stroke:0.15px #111;">Vista</div>
<svg class="i" style="left:493.7px;top:371.8px;width:20px;height:20px" viewBox="0 0 20.000 20.000" fill="#111"><path d="M6.6 16.45 L3.2 16.6 L3.35 13.2 Z" /><path d="M4.97 14.83 L13.45 6.35" stroke="#111" stroke-width="4.6"/><path d="M14.02 5.78 L16.14 3.66" stroke="#111" stroke-width="4.6"/><path d="M5.25 13.0 L12.32 5.93" stroke="#fff" stroke-width="0.9"/></svg>
<div class="t" style="left:514.75px;top:371.15px;font-size:14px;line-height:20px;color:#111;letter-spacing:0.324px;-webkit-text-stroke:0.15px #111;">Editar</div>
<svg class="i" style="left:497.2px;top:402.1px;width:13.4px;height:13.2px" viewBox="0 0 13.400 13.200" fill="#111"><path d="M6.7 0 L13.4 6.7 L6.7 13.4 L0 6.7 Z"/><path d="M5.8 5.8 H3.4 L5.8 3.4 Z M7.6 5.8 H10 L7.6 3.4 Z M5.8 7.6 H3.4 L5.8 10 Z M7.6 7.6 H10 L7.6 10 Z" fill="#fff"/></svg>
<div class="t" style="left:514.75px;top:400.15px;font-size:14px;line-height:20px;color:#111;letter-spacing:0.549px;-webkit-text-stroke:0.15px #111;">Mover</div>
<svg class="i" style="left:497.1px;top:432.1px;width:11.7px;height:13.3px" viewBox="0 0 11.700 13.300" fill="none"><path d="M1.8 2.65 H8.15 V11.5 Q8.15 12.65 7 12.65 H1.8 Q0.65 12.65 0.65 11.5 V3.8 Q0.65 2.65 1.8 2.65 Z" fill="#fff" stroke="#111" stroke-width="1.3"/><path d="M3.95 0.65 H8.8 L11.05 2.9 V10.35 H3.95 Z" fill="#fff" stroke="#111" stroke-width="1.3" stroke-linejoin="round"/><path d="M8.4 0.6 L11.1 3.3 H8.4 Z" fill="#111"/></svg>
<div class="t" style="left:512.49px;top:429.15px;font-size:14px;line-height:20px;color:#111;letter-spacing:0.342px;-webkit-text-stroke:0.15px #111;">Copiar</div>
<svg class="i" style="left:497px;top:460.8px;width:10.7px;height:14px" viewBox="0 0 10.500 14.000" fill="#111"><path d="M0 0 H6.2 V3.8 H10.5 V14 H0 Z"/><path d="M7.0 0.2 L10.4 3.0 H7.0 Z"/></svg>
<div class="t" style="left:510.75px;top:458.15px;font-size:14px;line-height:20px;color:#111;letter-spacing:0.220px;-webkit-text-stroke:0.15px #111;">Rebautizar</div>
<svg class="i" style="left:496.9px;top:490.1px;width:14px;height:13.1px" viewBox="0 0 14.500 14.000" fill="#111"><circle cx="9.7" cy="4.75" r="4.75"/><circle cx="10.8" cy="3.7" r="1.05" fill="#fff"/><path d="M5.2 5.5 L9.0 9.3 L6.7 11.6 L5.9 11.0 L5.0 11.9 L4.4 11.3 L1.9 14 H0 V11.1 Z"/></svg>
<div class="t" style="left:514.59px;top:487.15px;font-size:14px;line-height:20px;color:#111;letter-spacing:0.416px;-webkit-text-stroke:0.15px #111;">Cambiar permisos</div>
<svg class="i" style="left:497.8px;top:519.2px;width:11.9px;height:11.2px" viewBox="0 0 11.400 10.800" fill="#111"><path d="M2.4 0 L5.7 3.2 L9 0 L11.4 2.4 L8.1 5.4 L11.4 8.4 L9 10.8 L5.7 7.6 L2.4 10.8 L0 8.4 L3.3 5.4 L0 2.4 Z"/></svg>
<div class="t" style="left:514.15px;top:516.15px;font-size:14px;line-height:20px;color:#111;letter-spacing:0.719px;-webkit-text-stroke:0.15px #111;">Borrar</div>
<div class="r" style="left:491px;top:539px;width:106px;height:33px;border:6px solid #5ff000;box-shadow:0 0 5px rgba(0,0,0,0.35);"></div>
<div class="r" style="left:497px;top:545px;width:94px;height:21px;background:#f4f4f4;box-shadow:inset 0 0 6px 2px rgba(0,0,0,0.5);"></div>
<svg class="i" style="left:497.6px;top:547.9px;width:13px;height:11.5px" viewBox="0 0 13.000 11.500" fill="#111"><path d="M6.75 5.45 L6.75 0.9 L11.3 5.45 Z M6.15 5.85 L1.6 5.85 L6.15 10.4 Z"/><path d="M8 4.2 L12.2 0.7 M4.9 7.1 L0.7 10.6" stroke="#111" stroke-width="2.1" stroke-linecap="round"/></svg>
<div class="t" style="left:514.59px;top:545.15px;font-size:14px;line-height:20px;color:#111;letter-spacing:0.737px;-webkit-text-stroke:0.15px #111;">Comprimir</div>
<div class="r" style="left:0px;top:0px;width:1px;height:574px;background:#032a40;"></div>
<div class="r" style="left:1364px;top:0px;width:1px;height:574px;background:#032a40;"></div>
<div class="r" style="left:0px;top:573px;width:1365px;height:1px;background:#032a40;"></div>
</body></html>
